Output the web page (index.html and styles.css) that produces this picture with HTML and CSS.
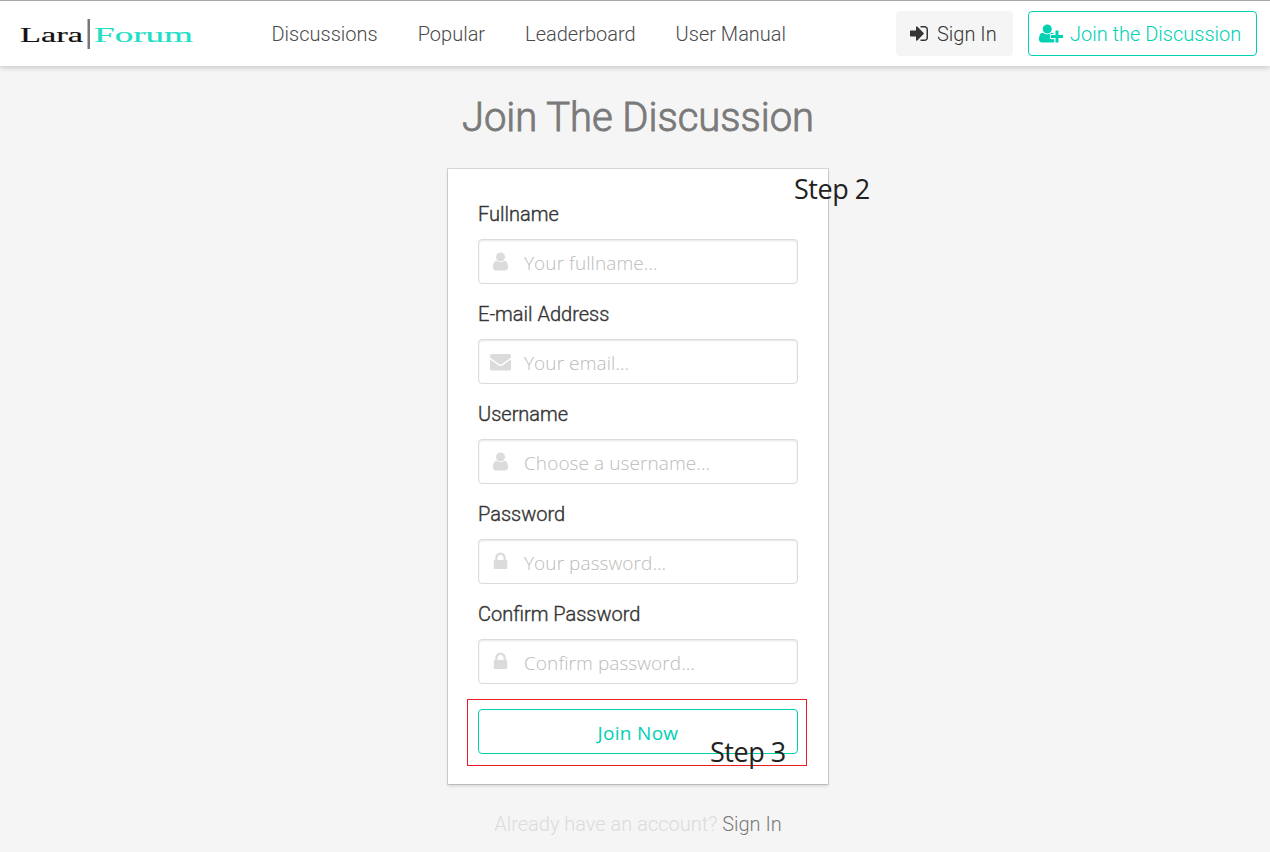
FILE: index.html
```html
<!DOCTYPE html>
<html lang="en">
<head>
<meta charset="utf-8">
<title>Lara Forum</title>
<link rel="stylesheet" href="styles.css">
</head>
<body>
<svg class="sprite" aria-hidden="true">
  <symbol id="user" viewBox="0 0 1792 1792"><path d="M1536 1399q0 109-62.500 187t-150.500 78h-854q-88 0-150.500-78t-62.500-187q0-85 8.500-160.500t31.500-152 58.500-131 94-89 134.500-34.500q131 128 313 128t313-128q76 0 134.500 34.500t94 89 58.500 131 31.500 152 8.500 160.500zm-256-887q0 159-112.500 271.500t-271.500 112.500-271.500-112.500-112.500-271.500 112.500-271.500 271.500-112.500 271.500 112.500 112.500 271.500z"/></symbol>
  <symbol id="lock" viewBox="0 0 1792 1792"><path d="M640 768h512v-192q0-106-75-181t-181-75-181 75-75 181v192zm832 96v576q0 40-28 68t-68 28h-960q-40 0-68-28t-28-68v-576q0-40 28-68t68-28h32v-192q0-184 132-316t316-132 316 132 132 316v192h32q40 0 68 28t28 68z"/></symbol>
  <symbol id="envelope" viewBox="0 0 1792 1792"><path d="M1792 710v794q0 66-47 113t-113 47h-1472q-66 0-113-47t-47-113v-794q44 49 101 87 362 246 497 345 57 42 92.500 65.500t94.500 48 110 24.500h2q51 0 110-24.500t94.500-48 92.500-65.500q170-123 498-345 57-39 100-87zm0-294q0 79-49 151t-122 123q-376 261-468 325-10 7-42.500 31t-54 38.500-52 32.500-57.500 27-50 9h-2q-23 0-50-9t-57.500-27-52-32.500-54-38.500-42.500-31q-91-64-262-182.500t-205-142.500q-62-42-117-115.500t-55-136.500q0-78 41.500-130t118.500-52h1472q65 0 112.500 47t47.500 113z"/></symbol>
</svg>

<header class="nav">
  <a class="logo">
    <svg width="176" height="34" viewBox="0 0 176 34">
      <text class="logo-lara" x="1" y="24.500" textLength="63" lengthAdjust="spacingAndGlyphs">Lara</text>
      <rect class="logo-bar" x="68.500" y="2" width="2.500" height="30"/>
      <text class="logo-forum" x="75" y="24.500" textLength="99" lengthAdjust="spacingAndGlyphs">Forum</text>
    </svg>
  </a>
  <nav class="links">
    <a>Discussions</a><a>Popular</a><a>Leaderboard</a><a>User Manual</a>
  </nav>
  <div class="actions">
    <a class="button signin">
      <svg class="icon-signin" viewBox="0 0 1536 1792"><path d="M1184 896q0 26-19 45l-544 544q-19 19-45 19t-45-19-19-45v-288h-448q-26 0-45-19t-19-45v-384q0-26 19-45t45-19h448v-288q0-26 19-45t45-19 45 19l544 544q19 19 19 45zm352-352v704q0 119-84.500 203.500t-203.500 84.500h-320q-13 0-22.500-9.500t-9.500-22.500q0-4-1-20t-.5-26.500 3-23.500 10-19.500 20.500-6.500h320q66 0 113-47t47-113v-704q0-66-47-113t-113-47h-312l-11.500-1-11.500-3-8-5.500-7-9-2-13.500q0-4-1-20t-.5-26.500 3-23.500 10-19.500 20.500-6.500h320q119 0 203.500 84.500t84.500 203.500z"/></svg>
      <span>Sign In</span>
    </a>
    <a class="button join">
      <svg class="icon-join" viewBox="0 0 2048 1792"><path d="M704 896q-159 0-271.500-112.500t-112.500-271.500 112.500-271.500 271.500-112.500 271.500 112.500 112.500 271.500-112.500 271.500-271.500 112.500zm960 128h352q13 0 22.500 9.500t9.500 22.500v192q0 13-9.500 22.500t-22.500 9.500h-352v352q0 13-9.500 22.500t-22.500 9.500h-192q-13 0-22.500-9.500t-9.500-22.500v-352h-352q-13 0-22.500-9.500t-9.500-22.500v-192q0-13 9.500-22.500t22.500-9.500h352v-352q0-13 9.500-22.500t22.500-9.500h192q13 0 22.500 9.500t9.500 22.500v352zm-736 224q0 52 38 90t90 38h256v238q-68 50-171 50h-874q-121 0-194-69t-73-190q0-53 3.500-103.500t14-109 26.500-108.500 43-97.500 62-81 85.500-53.500 111.500-20q19 0 39 17 79 61 154.500 91.500t164.500 30.500 164.500-30.500 154.500-91.500q20-17 39-17 132 0 217 96h-223q-52 0-90 38t-38 90v192z"/></svg>
      <span>Join the Discussion</span>
    </a>
  </div>
</header>

<main class="page">
  <h1 class="title">Join The Discussion</h1>
  <form class="box">
    <label class="label">Fullname</label>
    <div class="control"><svg class="icon"><use href="#user"/></svg><span class="hint">Your fullname...</span></div>
    <label class="label">E-mail Address</label>
    <div class="control"><svg class="icon"><use href="#envelope"/></svg><span class="hint">Your email...</span></div>
    <label class="label">Username</label>
    <div class="control"><svg class="icon"><use href="#user"/></svg><span class="hint">Choose a username...</span></div>
    <label class="label">Password</label>
    <div class="control"><svg class="icon"><use href="#lock"/></svg><span class="hint">Your password...</span></div>
    <label class="label">Confirm Password</label>
    <div class="control"><svg class="icon"><use href="#lock"/></svg><span class="hint">Confirm password...</span></div>
    <div class="highlight">
      <div class="submit">Join Now</div>
      <span class="step step-three">Step 3</span>
    </div>
    <span class="step step-two">Step 2</span>
  </form>
  <p class="footnote">Already have an account? <a>Sign In</a></p>
</main>
</body>
</html>
```
FILE: styles.css
```css
* { box-sizing: border-box; }

body {
  margin: 0;
  height: 852px;
  overflow: hidden;
  background: #f5f5f5;
  color: #363636;
  font: 300 20px/30px Roboto, sans-serif;
}

.sprite { display: none; }
svg { display: block; flex: none; fill: currentColor; }

.nav {
  display: flex;
  align-items: center;
  height: 66px;
  padding: 0 13px 0 19px;
  border-top: 1px solid #aaa;
  background: #fff;
  box-shadow: 0 2px 5px rgba(10, 10, 10, .18);
}

.logo-lara, .logo-forum {
  font-family: "Liberation Serif", serif;
  font-size: 21px;
  font-weight: 400;
  stroke-width: .2px;
}
.logo-lara { fill: #111; stroke: #111; }
.logo-forum { fill: #1fe0c6; stroke: #1fe0c6; }
.logo-bar { fill: #777; }

.links { display: flex; gap: 40px; margin-left: 76.500px; padding-top: 1px; color: #4a4a4a; }
.links a, .button span { white-space: nowrap; }
.button span { padding-top: 1px; }

.actions { display: flex; gap: 15px; margin-left: auto; }
.button {
  display: flex;
  align-items: center;
  height: 45px;
  border: 1px solid transparent;
  border-radius: 4px;
}
.signin { width: 117px; padding-left: 13px; gap: 9px; background: #f5f5f5; }
.join { width: 229px; padding-left: 10px; gap: 7px; border-color: #00d1b2; color: #00d1b2; }
.icon-signin { width: 18px; height: 21px; }
.icon-join { width: 24px; height: 21px; }

.page { display: flex; flex-direction: column; align-items: center; padding-left: 6px; }
.title {
  margin: 28px 0;
  color: #7a7a7a;
  font-size: 40px;
  font-weight: 300;
  line-height: 47px;
  letter-spacing: -.03px;
  -webkit-text-stroke: .9px #7a7a7a;
}

.box {
  position: relative;
  width: 380px;
  height: 615px;
  padding: 30px;
  background: #fff;
  box-shadow: 0 2px 3px rgba(10, 10, 10, .15), 0 0 0 1px rgba(10, 10, 10, .13);
}
.label { display: block; height: 30px; margin-bottom: 10px; -webkit-text-stroke: .4px #363636; }
.control {
  display: flex;
  align-items: center;
  height: 45px;
  margin-bottom: 15px;
  padding-left: 11px;
  border: 1px solid #dbdbdb;
  border-radius: 4px;
  box-shadow: inset 0 1px 2px rgba(10, 10, 10, .1);
  color: #dbdbdb;
}
.icon { width: 21px; height: 21px; }
.hint, .submit, .step { font-family: "Open Sans", sans-serif; white-space: nowrap; }
.hint { margin: 2px 0 0 13px; color: #bbb; font-size: 19px; letter-spacing: .08px; }

.highlight {
  position: relative;
  width: 340px;
  height: 67px;
  margin-left: -11px;
  padding: 9px 8px 11px 10px;
  border: 1px solid #ed1c24;
}
.submit {
  height: 45px;
  border: 1px solid #00d1b2;
  border-radius: 4px;
  color: #00d1b2;
  font-size: 19px;
  font-weight: 400;
  line-height: 46px;
  letter-spacing: .3px;
  text-align: center;
}
.step {
  position: absolute;
  color: #222;
  font-size: 27px;
  font-weight: 400;
  line-height: 30px;
  letter-spacing: -.45px;
}
.step-two { left: 346px; top: 5px; }
.step-three { left: 242px; top: 37px; }

.footnote { margin: 25px 0 0; color: #dbdbdb; }
.footnote a { color: #7a7a7a; }
```
